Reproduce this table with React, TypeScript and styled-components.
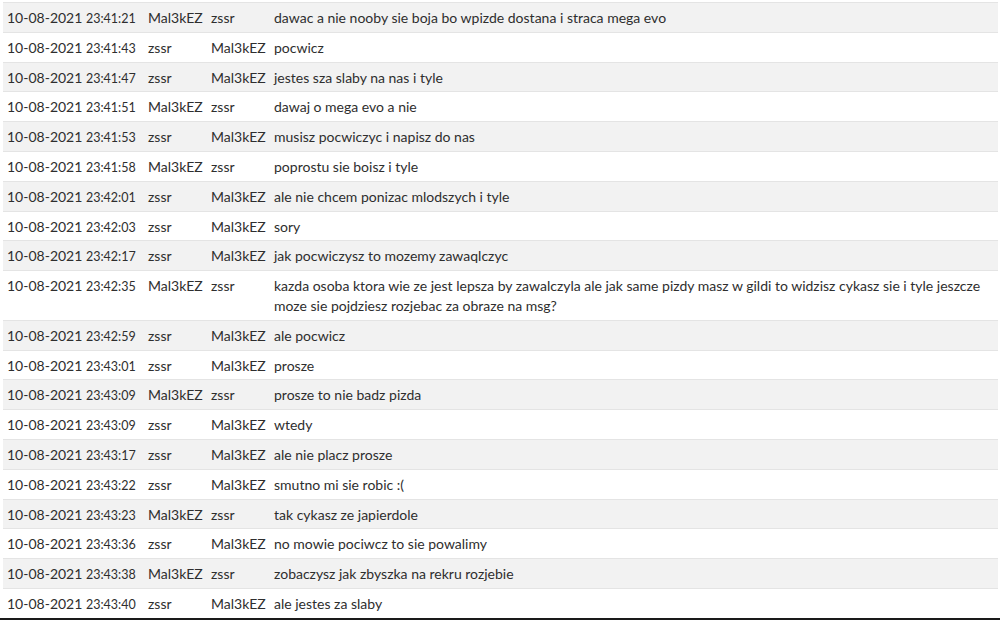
import React from 'react';
import styled, { createGlobalStyle } from 'styled-components';

const GlobalStyle = createGlobalStyle`
  html, body {
    margin: 0;
    padding: 0;
    background: #ffffff;
  }
  body {
    font-family: Lato, 'Open Sans', sans-serif;
    color: #2e2e2e;
    overflow: hidden;
  }
`;

const Page = styled.div`
  width: 1000px;
  height: 620px;
  box-sizing: border-box;
  padding: 2px 2px 0 3px;
  position: relative;
  overflow: hidden;
`;

const EdgeLine = styled.div`
  position: absolute;
  left: 0;
  right: 0;
  bottom: 0;
  height: 2px;
  background: #1a1a1a;
`;

const Table = styled.table`
  width: 100%;
  border-collapse: collapse;
  table-layout: fixed;
  font-size: 14px;
  border-top: 1px solid #e4e4e4;
`;

const Row = styled.tr<{ $shaded: boolean }>`
  background: ${p => (p.$shaded ? '#f2f2f2' : '#ffffff')};
  border-bottom: 1px solid #e4e4e4;
`;

const Cell = styled.td`
  padding: 5px 4px 4px;
  line-height: 19.8px;
  vertical-align: top;
  white-space: nowrap;
`;

const MessageCell = styled(Cell)`
  white-space: normal;
`;

const Time = styled.span`
  font-size: 12.5px;
  line-height: 0;
`;

type Msg = { date: string; time: string; from: string; to: string; text: string };

const ME = 'Mal3kEZ';
const HIM = 'zssr';

const messages: Msg[] = [
  { date: '10-08-2021', time: '23:41:21', from: ME, to: HIM, text: 'dawac a nie nooby sie boja bo wpizde dostana i straca mega evo' },
  { date: '10-08-2021', time: '23:41:43', from: HIM, to: ME, text: 'pocwicz' },
  { date: '10-08-2021', time: '23:41:47', from: HIM, to: ME, text: 'jestes sza slaby na nas i tyle' },
  { date: '10-08-2021', time: '23:41:51', from: ME, to: HIM, text: 'dawaj o mega evo a nie' },
  { date: '10-08-2021', time: '23:41:53', from: HIM, to: ME, text: 'musisz pocwiczyc i napisz do nas' },
  { date: '10-08-2021', time: '23:41:58', from: ME, to: HIM, text: 'poprostu sie boisz i tyle' },
  { date: '10-08-2021', time: '23:42:01', from: HIM, to: ME, text: 'ale nie chcem ponizac mlodszych i tyle' },
  { date: '10-08-2021', time: '23:42:03', from: HIM, to: ME, text: 'sory' },
  { date: '10-08-2021', time: '23:42:17', from: HIM, to: ME, text: 'jak pocwiczysz to mozemy zawaqlczyc' },
  { date: '10-08-2021', time: '23:42:35', from: ME, to: HIM, text: 'kazda osoba ktora wie ze jest lepsza by zawalczyla ale jak same pizdy masz w gildi to widzisz cykasz sie i tyle jeszcze moze sie pojdziesz rozjebac za obraze na msg?' },
  { date: '10-08-2021', time: '23:42:59', from: HIM, to: ME, text: 'ale pocwicz' },
  { date: '10-08-2021', time: '23:43:01', from: HIM, to: ME, text: 'prosze' },
  { date: '10-08-2021', time: '23:43:09', from: ME, to: HIM, text: 'prosze to nie badz pizda' },
  { date: '10-08-2021', time: '23:43:09', from: HIM, to: ME, text: 'wtedy' },
  { date: '10-08-2021', time: '23:43:17', from: HIM, to: ME, text: 'ale nie placz prosze' },
  { date: '10-08-2021', time: '23:43:22', from: HIM, to: ME, text: 'smutno mi sie robic :(' },
  { date: '10-08-2021', time: '23:43:23', from: ME, to: HIM, text: 'tak cykasz ze japierdole' },
  { date: '10-08-2021', time: '23:43:36', from: HIM, to: ME, text: 'no mowie pociwcz to sie powalimy' },
  { date: '10-08-2021', time: '23:43:38', from: ME, to: HIM, text: 'zobaczysz jak zbyszka na rekru rozjebie' },
  { date: '10-08-2021', time: '23:43:40', from: HIM, to: ME, text: 'ale jestes za slaby' },
];

export default function App() {
  return (
    <Page>
      <GlobalStyle />
      <Table>
        <colgroup>
          <col style={{ width: 141 }} />
          <col style={{ width: 63 }} />
          <col style={{ width: 63 }} />
          <col />
        </colgroup>
        <tbody>
          {messages.map((m, i) => (
            <Row key={i} $shaded={i % 2 === 0}>
              <Cell>
                {m.date} <Time>{m.time}</Time>
              </Cell>
              <Cell>{m.from}</Cell>
              <Cell>{m.to}</Cell>
              <MessageCell>{m.text}</MessageCell>
            </Row>
          ))}
        </tbody>
      </Table>
      <EdgeLine />
    </Page>
  );
}
